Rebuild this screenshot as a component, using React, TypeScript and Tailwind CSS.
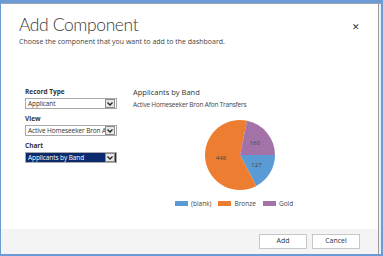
import React from 'react';

// ============================================================================
// Constants
// ============================================================================

const SLICES = [
  { label: '(blank)', value: 127, color: '#5b9bd5' },
  { label: 'Bronze', value: 448, color: '#ed7d31' },
  { label: 'Gold', value: 160, color: '#a373a8' },
];

const FONT = { fontFamily: '"Open Sans", "Noto Sans", sans-serif' };
const TITLE_FONT = { fontFamily: 'Lato, "Open Sans", sans-serif' };

// ============================================================================
// Sub-Components
// ============================================================================

function FakeSelect({ value, active = false }: { value: string; active?: boolean }): React.ReactElement {
  return (
    <div
      className={`flex items-center h-[11px] w-[92px] border border-[#a9a9a9] ${
        active ? 'bg-[#0c2a6e] text-white' : 'bg-white text-[#333]'
      }`}
    >
      <span className="flex-1 overflow-hidden whitespace-nowrap pl-[2px] text-[6.5px] leading-[9px] tracking-[-0.1px]">
        {value}
      </span>
      <span className="flex items-center justify-center h-[9px] w-[10px] mr-[1px] border border-[#8a8a8a] bg-[#e6e6e6]">
        <svg width="6" height="4" viewBox="0 0 6 4">
          <path d="M0.5 0.5 L3 3 L5.5 0.5" fill="none" stroke="#222" strokeWidth="1.3" />
        </svg>
      </span>
    </div>
  );
}

function Pie(): React.ReactElement {
  const cx = 36;
  const cy = 36;
  const r = 35;
  const total = SLICES.reduce((s, x) => s + x.value, 0);
  let angle = 90; // start at 3 o'clock, measured clockwise from top
  const pt = (deg: number, rad: number) => {
    const a = (deg * Math.PI) / 180;
    return [cx + rad * Math.sin(a), cy - rad * Math.cos(a)];
  };
  return (
    <svg width="72" height="72" viewBox="0 0 72 72">
      {SLICES.map((s) => {
        const sweep = (s.value / total) * 360;
        const [x1, y1] = pt(angle, r);
        const [x2, y2] = pt(angle + sweep, r);
        const [lx, ly] = pt(angle + sweep / 2, r * 0.55);
        const large = sweep > 180 ? 1 : 0;
        angle += sweep;
        return (
          <g key={s.label}>
            <path d={`M${cx} ${cy} L${x1} ${y1} A${r} ${r} 0 ${large} 1 ${x2} ${y2} Z`} fill={s.color} />
            <text x={lx} y={ly + 2} textAnchor="middle" fontSize="6" fill="#444" style={FONT}>
              {s.value}
            </text>
          </g>
        );
      })}
    </svg>
  );
}

// ============================================================================
// Main Component
// ============================================================================

export default function App(): React.ReactElement {
  return (
    <div className="w-[383px] h-[256px] bg-[#6a9bd6] pt-[3px] pl-[1px] pr-[2px] pb-[2px]" style={FONT}>
      <div className="flex h-full border-t border-[#9aa3ad]">
        <div className="flex flex-col flex-1 bg-white border-r border-[#9a9a9a]">
          {/* Header */}
          <div className="relative pl-[18px] pt-[9px]">
            <h1 className="text-[17.5px] font-light leading-[24px] text-[#3a3a3a] tracking-[-0.4px]" style={TITLE_FONT}>
              Add Component
            </h1>
            <p className="text-[7px] leading-[10px] text-[#444]">
              Choose the component that you want to add to the dashboard.
            </p>
            <span className="absolute right-[18px] top-[16px] text-[9px] text-[#333]">✕</span>
          </div>

          {/* Body */}
          <div className="flex flex-1 pt-[40px]">
            <div className="flex flex-col w-[108px] pl-[24px]">
              <label className="text-[6.5px] font-bold text-[#333] leading-[9px]">Record Type</label>
              <div className="mt-[2px]">
                <FakeSelect value="Applicant" />
              </div>
              <label className="mt-[5px] text-[6.5px] font-bold text-[#333] leading-[9px]">View</label>
              <div className="mt-[2px]">
                <FakeSelect value="Active Homeseeker Bron A" />
              </div>
              <label className="mt-[5px] text-[6.5px] font-bold text-[#333] leading-[9px]">Chart</label>
              <div className="mt-[2px]">
                <FakeSelect value="Applicants by Band" active />
              </div>
            </div>

            <div className="flex flex-col pl-[24px]">
              <h2 className="text-[7.5px] leading-[11px] text-[#333]">Applicants by Band</h2>
              <p className="mt-[3px] text-[6.5px] leading-[8px] text-[#444] tracking-[-0.2px]">
                Active Homeseeker Bron Afon Transfers
              </p>
              <div className="mt-[10px] ml-[71px]">
                <Pie />
              </div>
              <div className="mt-[8px] ml-[42px] flex items-center gap-[7px] text-[6.5px] text-[#444]">
                {SLICES.map((s) => (
                  <div key={s.label} className="flex items-center gap-[3px]">
                    <span className="block w-[13px] h-[5px]" style={{ backgroundColor: s.color }} />
                    <span>{s.label}</span>
                  </div>
                ))}
              </div>
            </div>
          </div>

          {/* Footer */}
          <div className="flex justify-end items-center gap-[5px] h-[25px] bg-[#f4f4f4] pr-[18px]">
            <button className="w-[48px] h-[15px] bg-white border border-[#c6c6c6] text-[7px] text-[#333]">Add</button>
            <button className="w-[48px] h-[15px] bg-white border border-[#c6c6c6] text-[7px] text-[#333]">Cancel</button>
          </div>
        </div>
        <div className="w-[2px] bg-[#eef1f4]" />
      </div>
    </div>
  );
}
